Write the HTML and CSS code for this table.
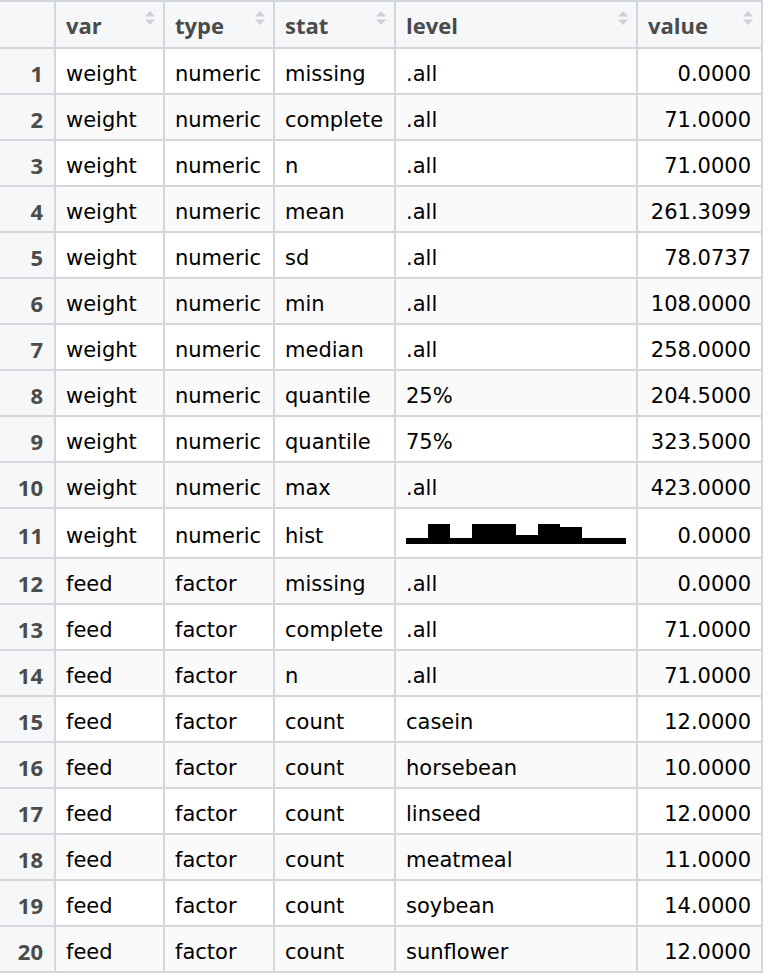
FILE: index.html
```html
<!DOCTYPE html>
<html>
<head>
<meta charset="utf-8">
<link rel="stylesheet" href="styles.css">
</head>
<body>
<table class="grid">
  <thead>
    <tr>
      <th class="c-idx"></th>
      <th class="c-var"><div class="hd"><span>var</span><svg class="sort" viewBox="0 0 10 14" width="10" height="14"><path d="M0 5.5 L5 0 L10 5.5 Z M0 8.5 L10 8.5 L5 14 Z"/></svg></div></th>
      <th class="c-type"><div class="hd"><span>type</span><svg class="sort" viewBox="0 0 10 14" width="10" height="14"><path d="M0 5.5 L5 0 L10 5.5 Z M0 8.5 L10 8.5 L5 14 Z"/></svg></div></th>
      <th class="c-stat"><div class="hd"><span>stat</span><svg class="sort" viewBox="0 0 10 14" width="10" height="14"><path d="M0 5.5 L5 0 L10 5.5 Z M0 8.5 L10 8.5 L5 14 Z"/></svg></div></th>
      <th class="c-level"><div class="hd"><span>level</span><svg class="sort" viewBox="0 0 10 14" width="10" height="14"><path d="M0 5.5 L5 0 L10 5.5 Z M0 8.5 L10 8.5 L5 14 Z"/></svg></div></th>
      <th class="c-value"><div class="hd"><span>value</span><svg class="sort" viewBox="0 0 10 14" width="10" height="14"><path d="M0 5.5 L5 0 L10 5.5 Z M0 8.5 L10 8.5 L5 14 Z"/></svg></div></th>
    </tr>
  </thead>
  <tbody>
    <tr><td class="idx">1</td><td>weight</td><td>numeric</td><td>missing</td><td>.all</td><td class="num">0.0000</td></tr>
    <tr><td class="idx">2</td><td>weight</td><td>numeric</td><td>complete</td><td>.all</td><td class="num">71.0000</td></tr>
    <tr><td class="idx">3</td><td>weight</td><td>numeric</td><td>n</td><td>.all</td><td class="num">71.0000</td></tr>
    <tr><td class="idx">4</td><td>weight</td><td>numeric</td><td>mean</td><td>.all</td><td class="num">261.3099</td></tr>
    <tr><td class="idx">5</td><td>weight</td><td>numeric</td><td>sd</td><td>.all</td><td class="num">78.0737</td></tr>
    <tr><td class="idx">6</td><td>weight</td><td>numeric</td><td>min</td><td>.all</td><td class="num">108.0000</td></tr>
    <tr><td class="idx">7</td><td>weight</td><td>numeric</td><td>median</td><td>.all</td><td class="num">258.0000</td></tr>
    <tr><td class="idx">8</td><td>weight</td><td>numeric</td><td>quantile</td><td>25%</td><td class="num">204.5000</td></tr>
    <tr><td class="idx">9</td><td>weight</td><td>numeric</td><td>quantile</td><td>75%</td><td class="num">323.5000</td></tr>
    <tr><td class="idx">10</td><td>weight</td><td>numeric</td><td>max</td><td>.all</td><td class="num">423.0000</td></tr>
    <tr class="hist-row"><td class="idx">11</td><td>weight</td><td>numeric</td><td>hist</td><td><div class="hist"><span style="height:6px"></span><span style="height:20px"></span><span style="height:6px"></span><span style="height:20px"></span><span style="height:20px"></span><span style="height:9px"></span><span style="height:20px"></span><span style="height:17px"></span><span style="height:6px"></span><span style="height:6px"></span></div></td><td class="num">0.0000</td></tr>
    <tr><td class="idx">12</td><td>feed</td><td>factor</td><td>missing</td><td>.all</td><td class="num">0.0000</td></tr>
    <tr><td class="idx">13</td><td>feed</td><td>factor</td><td>complete</td><td>.all</td><td class="num">71.0000</td></tr>
    <tr><td class="idx">14</td><td>feed</td><td>factor</td><td>n</td><td>.all</td><td class="num">71.0000</td></tr>
    <tr><td class="idx">15</td><td>feed</td><td>factor</td><td>count</td><td>casein</td><td class="num">12.0000</td></tr>
    <tr><td class="idx">16</td><td>feed</td><td>factor</td><td>count</td><td>horsebean</td><td class="num">10.0000</td></tr>
    <tr><td class="idx">17</td><td>feed</td><td>factor</td><td>count</td><td>linseed</td><td class="num">12.0000</td></tr>
    <tr><td class="idx">18</td><td>feed</td><td>factor</td><td>count</td><td>meatmeal</td><td class="num">11.0000</td></tr>
    <tr><td class="idx">19</td><td>feed</td><td>factor</td><td>count</td><td>soybean</td><td class="num">14.0000</td></tr>
    <tr><td class="idx">20</td><td>feed</td><td>factor</td><td>count</td><td>sunflower</td><td class="num">12.0000</td></tr>
  </tbody>
</table>
</body>
</html>
```
FILE: styles.css
```css
html, body {
  margin: 0;
  padding: 0;
  background: #ffffff;
}

.grid {
  border-collapse: separate;
  border-spacing: 0;
  table-layout: fixed;
  width: 763px;
  border-top: 2px solid #d3d6db;
  font-family: "DejaVu Sans", sans-serif;
  font-size: 21px;
  color: #000;
}

.grid th,
.grid td {
  box-sizing: border-box;
  border-right: 2px solid #d3d6db;
  border-bottom: 2px solid #d3d6db;
  padding: 0 10px;
  white-space: nowrap;
  overflow: hidden;
}

.c-idx { width: 56px; }
.c-var { width: 109px; }
.c-type { width: 110px; }
.c-stat { width: 121px; }
.c-level { width: 242px; }
.c-value { width: 125px; }

.grid th {
  height: 47px;
  background: #f6f7f9;
  font-family: "Open Sans", sans-serif;
  font-weight: 700;
  font-size: 22px;
  color: #4b4b4b;
  text-align: left;
  padding: 0 8px 0 10px;
  vertical-align: top;
}

.hd {
  display: flex;
  justify-content: space-between;
  align-items: flex-start;
  height: 45px;
}

.hd span {
  line-height: 45px;
  padding-top: 1px;
}

.sort {
  margin-top: 9px;
  fill: #cdd0d4;
  flex: none;
}

.grid td {
  height: 46px;
  padding-top: 5px;
  vertical-align: middle;
}

.grid tbody tr:nth-child(even) td {
  background: #fafafb;
}

.grid td.idx {
  background: #f6f7f9;
  font-family: "Open Sans", sans-serif;
  font-weight: 700;
  font-size: 22px;
  color: #4b4b4b;
  text-align: right;
  padding-right: 11px;
  padding-top: 3px;
}

.grid tbody tr:nth-child(even) td.idx {
  background: #f6f7f9;
}

.grid td.num {
  text-align: right;
}

.grid tr.hist-row td {
  height: 50px;
}

.hist {
  display: flex;
  align-items: flex-end;
  height: 20px;
  margin-top: -4px;
}

.hist span {
  width: 22px;
  background: #000;
}
```
